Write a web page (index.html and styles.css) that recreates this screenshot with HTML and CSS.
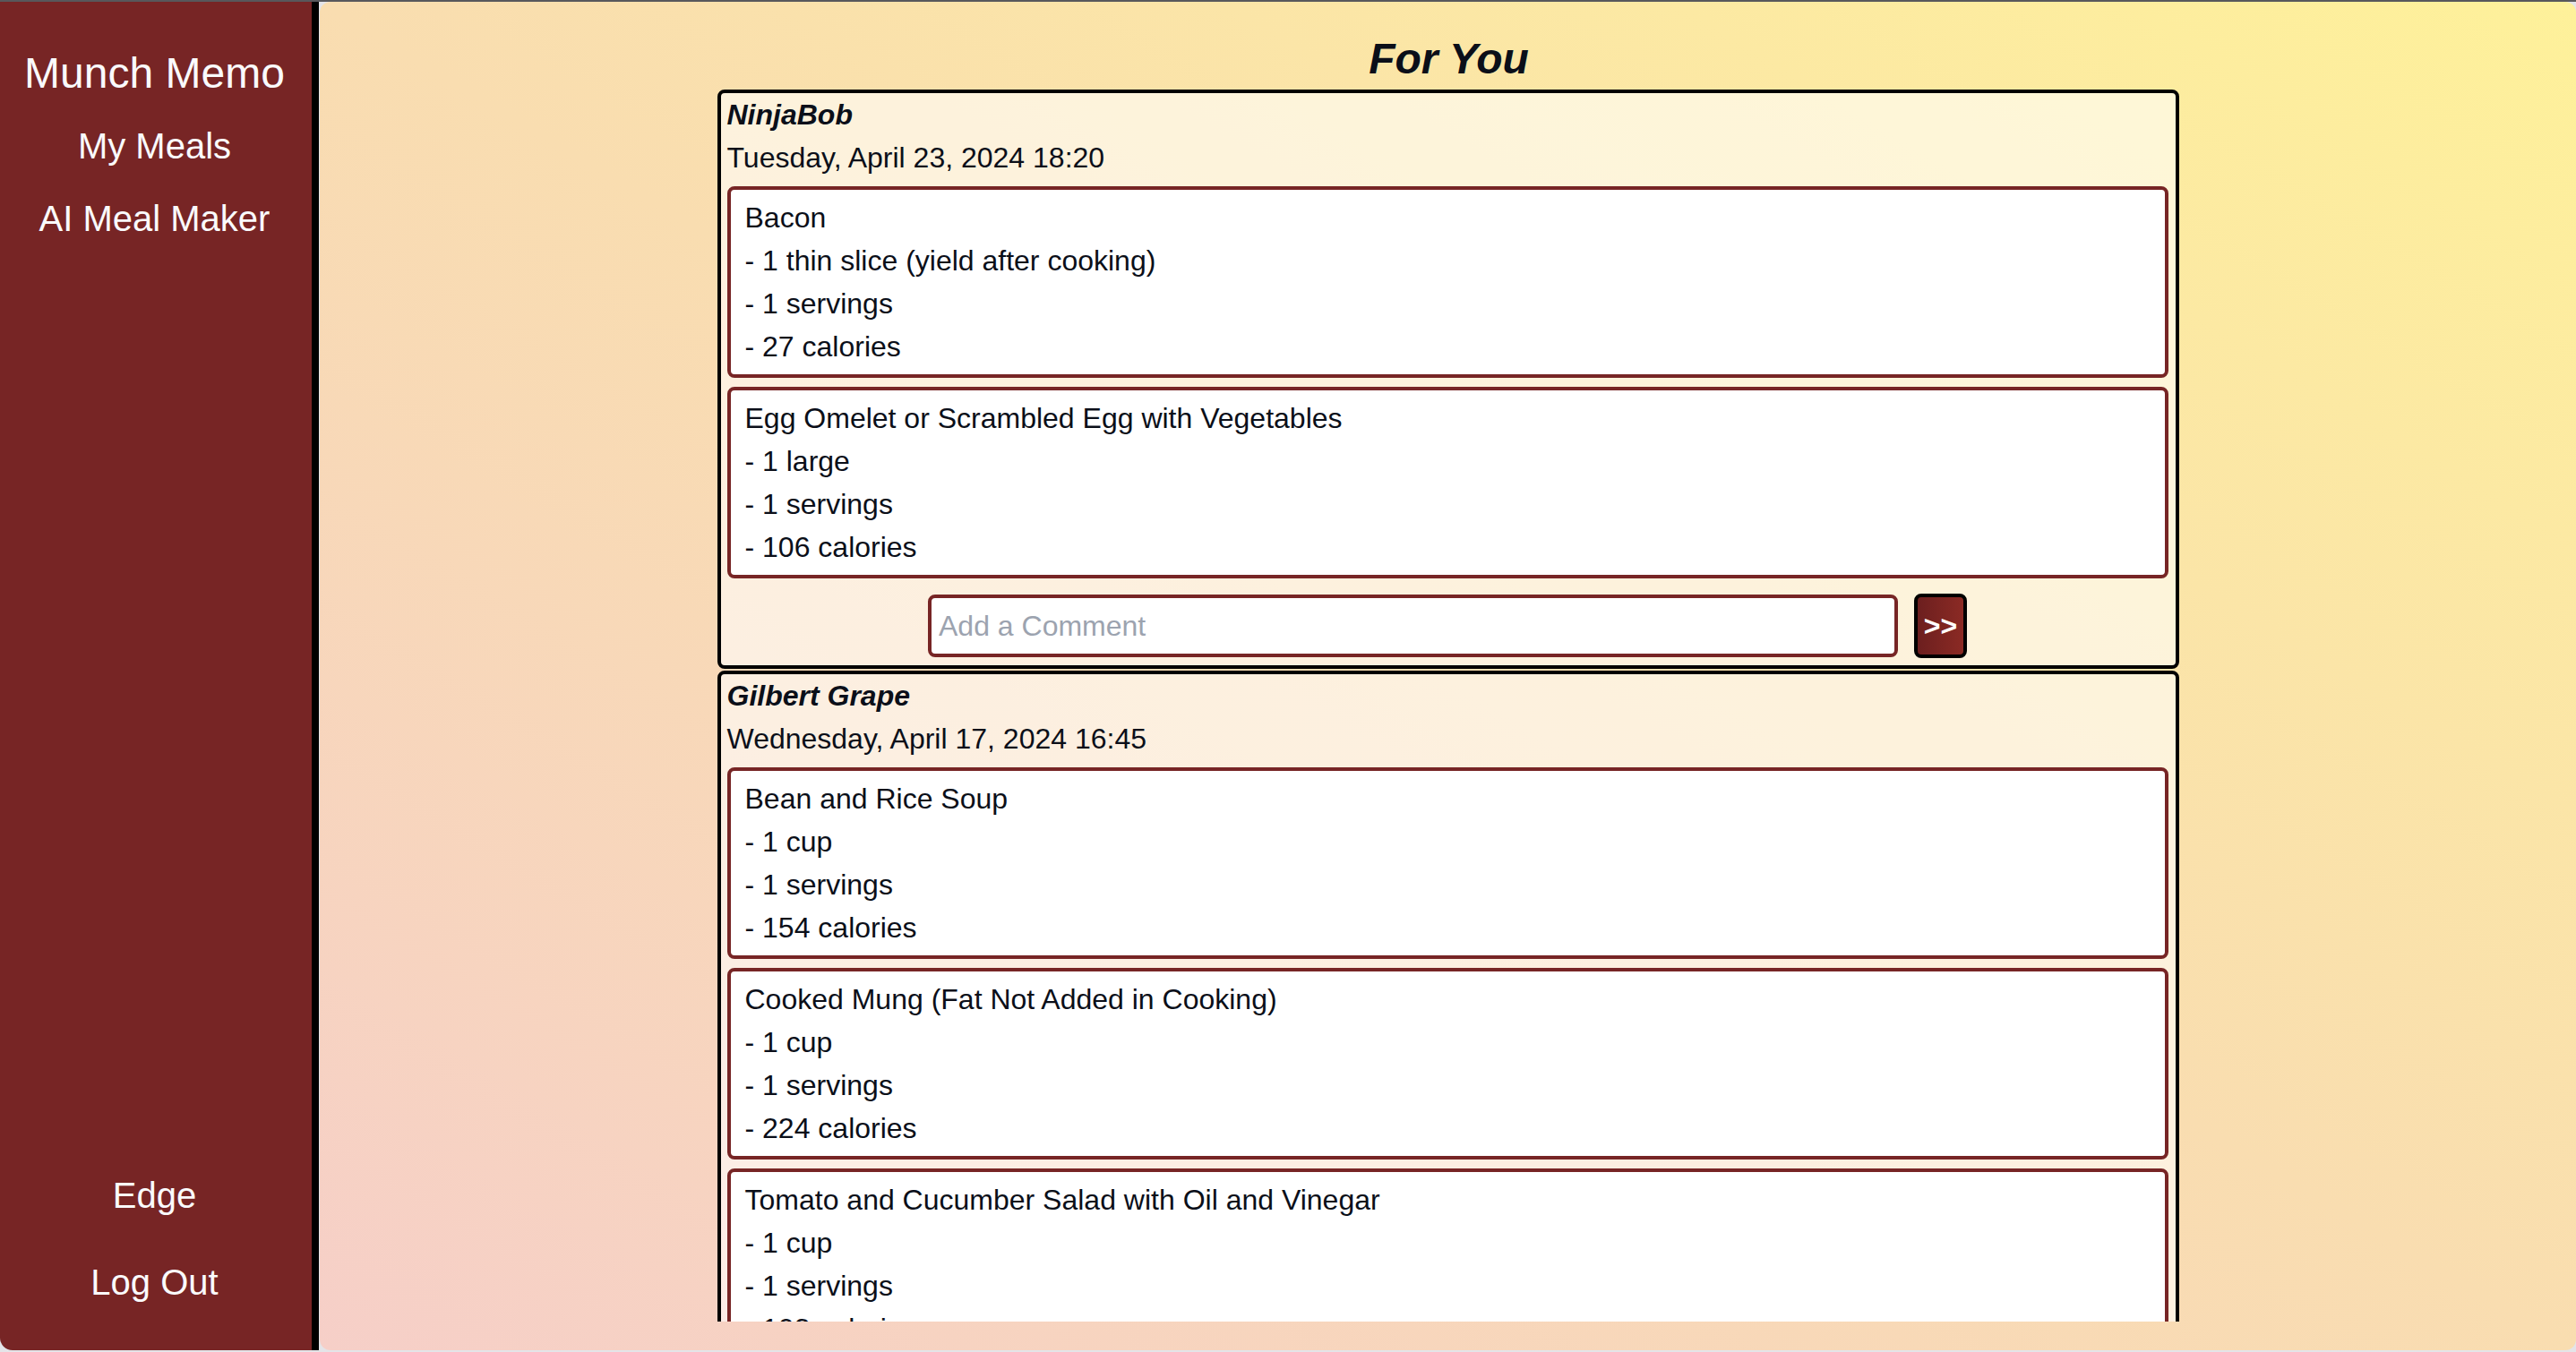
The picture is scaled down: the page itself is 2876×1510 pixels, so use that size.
FILE: index.html
```html
<!DOCTYPE html>
<html lang="en">
<head>
<meta charset="utf-8">
<title>Munch Memo - For You</title>
<link rel="stylesheet" href="styles.css">
</head>
<body>
<div class="app">
  <aside class="sidebar">
    <nav class="nav-top">
      <div class="brand">Munch Memo</div>
      <a class="nav-link first">My Meals</a>
      <a class="nav-link">AI Meal Maker</a>
    </nav>
    <nav class="nav-bottom">
      <a class="nav-link">Edge</a>
      <a class="nav-link last">Log Out</a>
    </nav>
  </aside>
  <main class="main">
    <h1 class="title">For You</h1>
    <div class="feed">
      <article class="post">
        <div class="post-name">NinjaBob</div>
        <div class="post-date">Tuesday, April 23, 2024 18:20</div>
        <div class="meals">
          <div class="meal">
            <div>Bacon</div>
            <div>- 1 thin slice (yield after cooking)</div>
            <div>- 1 servings</div>
            <div>- 27 calories</div>
          </div>
          <div class="meal">
            <div>Egg Omelet or Scrambled Egg with Vegetables</div>
            <div>- 1 large</div>
            <div>- 1 servings</div>
            <div>- 106 calories</div>
          </div>
        </div>
        <div class="comment-row">
          <input class="comment-input" type="text" placeholder="Add a Comment">
          <button class="send">&gt;&gt;</button>
        </div>
      </article>
      <article class="post">
        <div class="post-name">Gilbert Grape</div>
        <div class="post-date">Wednesday, April 17, 2024 16:45</div>
        <div class="meals">
          <div class="meal">
            <div>Bean and Rice Soup</div>
            <div>- 1 cup</div>
            <div>- 1 servings</div>
            <div>- 154 calories</div>
          </div>
          <div class="meal">
            <div>Cooked Mung (Fat Not Added in Cooking)</div>
            <div>- 1 cup</div>
            <div>- 1 servings</div>
            <div>- 224 calories</div>
          </div>
          <div class="meal">
            <div>Tomato and Cucumber Salad with Oil and Vinegar</div>
            <div>- 1 cup</div>
            <div>- 1 servings</div>
            <div>- 103 calories</div>
          </div>
        </div>
        <div class="comment-row">
          <input class="comment-input" type="text" placeholder="Add a Comment">
          <button class="send">&gt;&gt;</button>
        </div>
      </article>
    </div>
  </main>
</div>
</body>
</html>
```
FILE: styles.css
```css
html, body {
  margin: 0;
  padding: 0;
}

body {
  background: #e4e4e8;
  border-top: 2px solid #58585c;
  font-family: "Liberation Sans", Arial, Helvetica, sans-serif;
  color: #0b0f19;
  overflow: hidden;
  height: 1508px;
}

.app {
  display: flex;
  height: 1506px;
}

.sidebar {
  width: 348px;
  flex-shrink: 0;
  background: #772525;
  border-right: 8px solid #000;
  border-bottom-left-radius: 14px;
  display: flex;
  flex-direction: column;
  justify-content: space-between;
  align-items: center;
  color: #fafafc;
  text-align: center;
  padding: 48px 0 48px;
  box-sizing: content-box;
  height: calc(1506px - 96px);
}

.nav-top, .nav-bottom {
  display: flex;
  flex-direction: column;
  align-items: center;
}

.brand {
  font-size: 48px;
  line-height: 64px;
  margin-bottom: 21px;
  margin-right: 3px;
}

.nav-link {
  font-size: 40px;
  line-height: 56px;
  color: #fafafc;
  text-decoration: none;
  margin-bottom: 25px;
  margin-right: 3px;
}

.nav-bottom .nav-link {
  margin-bottom: 41px;
}

.nav-bottom .nav-link.last {
  margin-bottom: 0;
}

.main {
  flex: 1;
  min-width: 0;
  margin-left: 1px;
  border-radius: 12px;
  background: linear-gradient(to top right, #f6cfc8 0%, #f9ddb0 50%, #fef19a 100%);
  display: flex;
  flex-direction: column;
  align-items: center;
  padding: 32px 0 32px;
  box-sizing: border-box;
  height: 1506px;
}

.title {
  margin: 0 0 2px 2px;
  font-size: 48px;
  line-height: 64px;
  font-weight: 700;
  font-style: italic;
}

.feed {
  width: 1632px;
  flex: 1;
  min-height: 0;
  overflow: hidden;
  display: flex;
  flex-direction: column;
  gap: 2px;
}

.post {
  flex-shrink: 0;
  border: 4px solid #000;
  border-radius: 8px;
  background: rgba(255, 255, 255, 0.58);
  padding: 0 8px 8px 7px;
}

.post-name {
  font-size: 32px;
  line-height: 48px;
  font-weight: 700;
  font-style: italic;
}

.post-date {
  font-size: 32px;
  line-height: 48px;
}

.meals {
  display: flex;
  flex-direction: column;
  gap: 10px;
  margin-top: 8px;
}

.meal {
  background: #fff;
  border: 4px solid #772525;
  border-radius: 8px;
  padding: 7px 16px;
  font-size: 32px;
  line-height: 48px;
}

.comment-row {
  display: flex;
  justify-content: center;
  align-items: center;
  gap: 18px;
  margin-top: 17px;
}

.comment-input {
  width: 1083px;
  height: 70px;
  box-sizing: border-box;
  border: 4px solid #772525;
  border-radius: 8px;
  padding: 0 8px;
  background: #fff;
  font-family: "Liberation Sans", Arial, sans-serif;
  font-size: 32px;
  color: #0b0f19;
  outline: none;
}

.comment-input::placeholder {
  color: #9ca3af;
}

.send {
  width: 59px;
  height: 72px;
  box-sizing: border-box;
  border: 4px solid #000;
  border-radius: 8px;
  background: linear-gradient(to right, #6c1f1f, #8b2a24);
  color: #fff;
  font-family: "Liberation Sans", Arial, sans-serif;
  font-size: 32px;
  font-weight: 700;
  padding: 0;
}
```
